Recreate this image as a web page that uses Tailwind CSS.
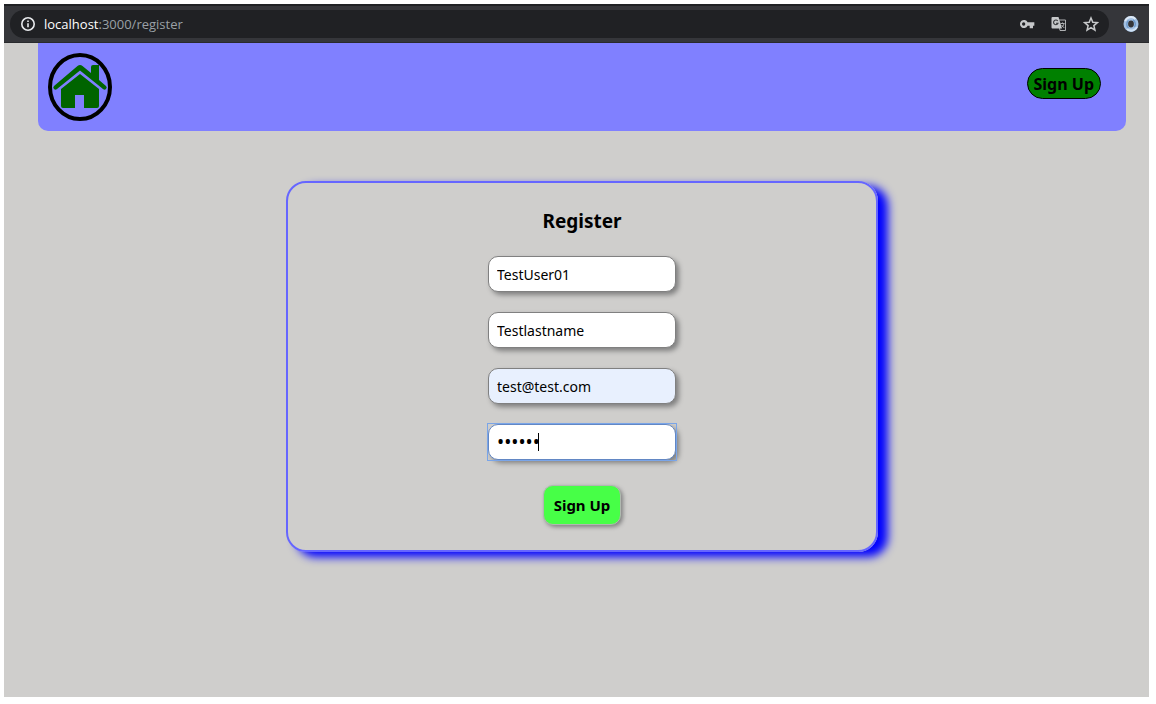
<!DOCTYPE html>
<html lang="en">
<head>
<meta charset="utf-8">
<title>Register</title>
<script src="https://cdn.jsdelivr.net/npm/@tailwindcss/browser@4"></script>
</head>
<body class="bg-white font-['Noto_Sans',sans-serif] text-black">
<div class="flex min-h-screen flex-col pt-1 pr-[7px] pb-[7px] pl-1">
  <div class="flex h-[39px] items-center border-t-2 border-b border-t-[#202124] border-b-[#292a2d] bg-[#35363a] pr-2.5 pl-1.5 font-['Open_Sans',sans-serif]">
    <div class="flex h-7 flex-1 items-center rounded-full bg-[#202124] px-2.5">
      <svg class="size-4 shrink-0" viewBox="0 0 16 16" fill="none" stroke="#e8eaed" stroke-width="1.6" aria-hidden="true"><circle cx="8" cy="8" r="6.2"/><path d="M8 7.2v4M8 4.4v1.6"/></svg>
      <div role="textbox" contenteditable="true" aria-label="Address" class="ml-2 flex-1 text-[13px] leading-5 text-[#9aa0a6] outline-none"><span class="text-white">localhost</span>:3000/register</div>
      <div class="flex items-center gap-4">
        <button type="button" aria-label="Passwords"><svg class="block size-4" viewBox="0 0 24 24" fill="#c6c8ca"><path fill-rule="evenodd" d="M12.900 9.500A6 6 0 1 0 12.900 14.500H16v4h5v-4h2v-5zM7 14.500a2.500 2.500 0 1 1 0-5 2.500 2.500 0 0 1 0 5z"/></svg></button>
        <button type="button" aria-label="Translate"><svg class="block size-4" viewBox="0 0 16 16"><path d="M7 4h7.500v10.500H9z" fill="#202124" stroke="#aeb0b2"/><path d="M1.500 1h6l3.500 11.500H1.500a1 1 0 0 1-1-1V2a1 1 0 0 1 1-1z" fill="#c6c8ca"/><path d="M6.700 5A2.300 2.300 0 1 0 7 7.200H5" fill="none" stroke="#3a3b3e" stroke-width="1.100"/><path d="M9.500 7.500h4M11.500 6.500v1M13 7.500c-.3 2-1.500 3.200-2.500 4M10.500 9l2.800 3" fill="none" stroke="#aeb0b2"/></svg></button>
        <button type="button" aria-label="Bookmark"><svg class="block size-4" viewBox="0 0 24 24" fill="none" stroke="#c6c8ca" stroke-width="2.300"><path d="m12 3 2.700 6.300 6.800.6-5.200 4.500 1.600 6.700L12 17.500l-5.900 3.600 1.600-6.700-5.200-4.500 6.800-.6z"/></svg></button>
      </div>
    </div>
    <button type="button" aria-label="Extension" class="ml-3.5"><svg class="block size-4" viewBox="0 0 16 16" fill="none"><ellipse cx="8" cy="8" rx="5.200" ry="5.700" stroke="#a3c1e3" stroke-width="4.600"/><path d="M2 5A6.500 6.500 0 0 1 12.500 3" stroke="#dce9f7" stroke-width="2"/><path d="M14 11A6.500 6.500 0 0 1 4 13" stroke="#d0e2f5" stroke-width="2"/><path d="M5.500 4.500A5 5 0 0 0 5.500 12M10 4A5 5 0 0 1 11.500 11" stroke="#6f9aca" stroke-width="1.500"/></svg></button>
  </div>
  <div class="flex-1 bg-[#cfcecc] pr-[23px] pl-[34px]">
    <header class="flex h-[88px] items-start justify-between rounded-b-[10px] bg-[#8080ff] pt-2.5 pr-[25px] pl-2.5">
      <a href="#" aria-label="Home"><svg class="block h-[68px] w-16" viewBox="0 0 64 68"><ellipse cx="32" cy="34" rx="30" ry="32" fill="none" stroke="#000" stroke-width="4"/><g fill="#006400"><path d="M32 21 13 36v17q0 2 2 2h12V42h9v13h13q2 0 2-2V36z"/><path d="M29.500 13q2.500-2 5 0l8.500 7v-6q0-2 2-2h6v15l7 6q1.500 1.500 0 3t-3 0L32 17.500 9 36q-1.500 1.500-3 0t0-3z"/></g></svg></a>
      <button type="button" class="mt-[15px] flex h-[31px] items-center rounded-full border border-black bg-[#008000] px-1.5 text-base font-bold whitespace-nowrap">Sign Up</button>
    </header>
    <form class="mx-auto mt-[50px] flex w-full max-w-[592px] flex-col items-center rounded-[20px] border-2 border-[#6666ff] pt-6 pb-[25px] shadow-[10px_5px_10px_#0000ff]">
      <h1 class="text-[19px] leading-7 font-bold">Register</h1>
      <div class="mt-[21px] flex flex-col gap-5 text-sm">
        <input aria-label="First name" type="text" value="TestUser01" class="h-9 w-[188px] rounded-[10px] border border-[#808080] bg-white px-2 shadow-[3px_3px_5px_#808080] outline-none">
        <input aria-label="Last name" type="text" value="Testlastname" class="h-9 w-[188px] rounded-[10px] border border-[#808080] bg-white px-2 shadow-[3px_3px_5px_#808080] outline-none">
        <input aria-label="Email" type="email" value="test@test.com" class="h-9 w-[188px] rounded-[10px] border border-[#808080] bg-[#e8f0fe] px-2 shadow-[3px_3px_5px_#808080] outline-none">
        <div class="relative h-9 w-[188px] outline outline-[#7aa5e8]">
          <input aria-label="Password" type="password" value="123456" class="block h-9 w-full rounded-[10px] border border-[#6287c4] bg-white px-2 text-[19px] shadow-[3px_3px_5px_#808080] outline-none">
          <span class="absolute top-[9px] left-[50px] h-[18px] w-px bg-black" aria-hidden="true"></span>
        </div>
      </div>
      <button type="submit" class="mt-[25px] h-10 rounded-[10px] border border-[#b0b8b0] bg-[#47ff47] px-2.5 text-[15px] font-bold whitespace-nowrap shadow-[2px_2px_4px_#808080]">Sign Up</button>
    </form>
  </div>
</div>
</body>
</html>
